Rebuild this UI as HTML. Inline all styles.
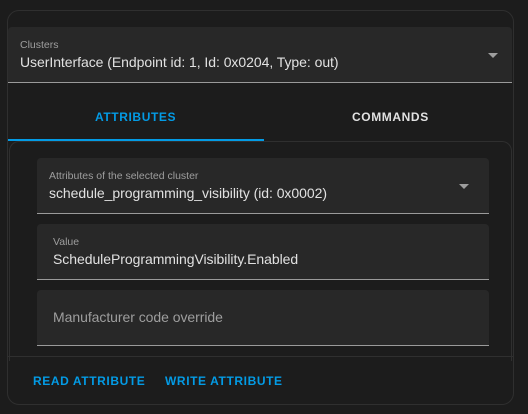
<!DOCTYPE html>
<html><head><style>
*{margin:0;padding:0;box-sizing:border-box}
body{width:528px;height:414px;background:#1c1c1c;font-family:"Liberation Sans",Roboto,sans-serif;position:relative;overflow:hidden}
.a{position:absolute;white-space:nowrap}
.card{left:7px;top:10px;width:507px;height:395px;border:1px solid #2f2f2f;border-radius:12px;background:#1c1c1c}
.field{background:#282828;border-bottom:1px solid #9a9a9a;border-radius:4px 4px 0 0}
.lbl{font-size:10.5px;color:#9e9e9e}
.val{font-size:14px;color:#e1e1e1;letter-spacing:-0.05px}
.arrow{width:0;height:0;border-left:5px solid transparent;border-right:5px solid transparent;border-top:5px solid #9e9e9e}
.btn{font-size:12px;font-weight:bold;color:#039be5;letter-spacing:0.6px}
</style></head><body>
<div class="a card"></div>
<div class="a field" style="left:8px;top:27px;width:504px;height:56px"></div>
<div class="a lbl" style="left:20px;top:39px">Clusters</div>
<div class="a val" style="left:20px;top:54px">UserInterface (Endpoint id: 1, Id: 0x0204, Type: out)</div>
<div class="a arrow" style="left:488px;top:53px"></div>
<div class="a btn" style="left:95px;top:110px;color:#039be5">ATTRIBUTES</div>
<div class="a btn" style="left:352px;top:110px;color:#e1e1e1">COMMANDS</div>
<div class="a" style="left:8px;top:139px;width:256px;height:2px;background:#039be5"></div>
<div class="a" style="top:141px;height:220px;border:1px solid #2f2f2f;border-bottom:none;border-radius:10px 10px 0 0;left:9px;width:503px"></div>
<div class="a field" style="left:37px;top:158px;width:452px;height:56px"></div>
<div class="a lbl" style="left:49px;top:170px">Attributes of the selected cluster</div>
<div class="a val" style="left:49px;top:185px">schedule_programming_visibility (id: 0x0002)</div>
<div class="a arrow" style="left:459px;top:184px"></div>
<div class="a field" style="left:37px;top:224px;width:452px;height:56px"></div>
<div class="a lbl" style="left:53px;top:236px">Value</div>
<div class="a val" style="left:53px;top:251px">ScheduleProgrammingVisibility.Enabled</div>
<div class="a field" style="left:37px;top:290px;width:452px;height:56px"></div>
<div class="a val" style="left:53px;top:309px;color:#9e9e9e">Manufacturer code override</div>
<div class="a" style="left:8px;top:356px;width:505px;height:1px;background:#2f2f2f"></div>
<div class="a btn" style="left:33px;top:374px">READ ATTRIBUTE</div>
<div class="a btn" style="left:165px;top:374px">WRITE ATTRIBUTE</div>
</body></html>
